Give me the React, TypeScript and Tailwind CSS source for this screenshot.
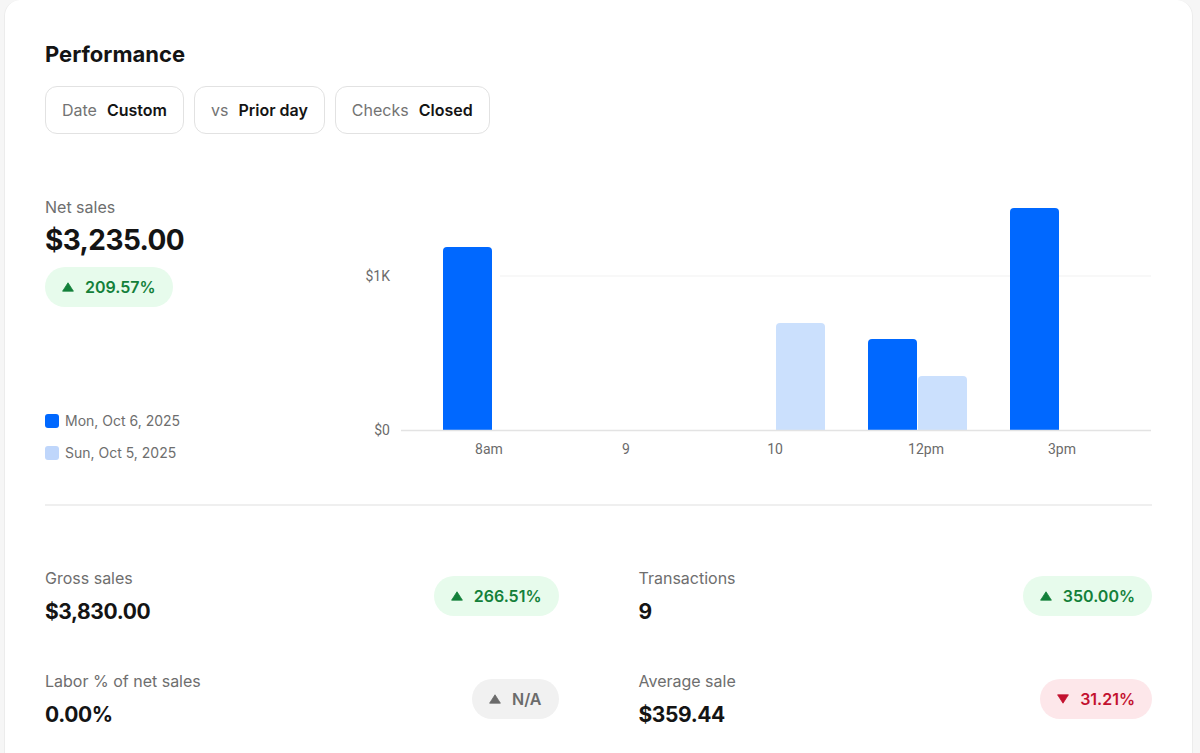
import React from "react";

type Trend = "up" | "down" | "na";

const font = { fontFamily: "Inter, 'Noto Sans', sans-serif" };

function Triangle({ dir, color }: { dir: "up" | "down"; color: string }) {
  return (
    <svg width="12" height="10" viewBox="0 0 12 10">
      {dir === "up" ? (
        <path d="M6 0.8 L11.4 9.2 L0.6 9.2 Z" fill={color} strokeLinejoin="round" stroke={color} strokeWidth="0.8" />
      ) : (
        <path d="M0.6 0.8 L11.4 0.8 L6 9.2 Z" fill={color} strokeLinejoin="round" stroke={color} strokeWidth="0.8" />
      )}
    </svg>
  );
}

function Pill({ trend, value }: { trend: Trend; value: string }) {
  if (trend === "up")
    return (
      <div className="flex h-10 items-center gap-[11px] rounded-full bg-[#e7fbec] px-[17px] text-[16px] font-semibold text-[#13803a]">
        <Triangle dir="up" color="#13803a" />
        {value}
      </div>
    );
  if (trend === "down")
    return (
      <div className="flex h-10 items-center gap-[11px] rounded-full bg-[#fde7ea] px-[17px] text-[16px] font-semibold text-[#c3112f]">
        <Triangle dir="down" color="#c3112f" />
        {value}
      </div>
    );
  return (
    <div className="flex h-10 items-center gap-[11px] rounded-full bg-[#f1f1f1] px-[17px] text-[16px] font-semibold text-[#6b6b6b]">
      <Triangle dir="up" color="#6b6b6b" />
      {value}
    </div>
  );
}

function Chip({ label, value }: { label: string; value: string }) {
  return (
    <div className="flex h-12 items-center gap-[10px] rounded-xl border border-[#e2e2e2] px-4 text-[16px]">
      <span className="text-[#737373]">{label}</span>
      <span className="font-semibold text-[#141414]">{value}</span>
    </div>
  );
}

function Metric({ label, value, trend, change }: { label: string; value: string; trend: Trend; change: string }) {
  return (
    <div className="flex items-center justify-between">
      <div>
        <div className="text-[16px] leading-6 text-[#6e6e6e]">{label}</div>
        <div className="mt-2 text-[21px] font-bold leading-7 tracking-[-0.4px] text-[#141414]">{value}</div>
      </div>
      <Pill trend={trend} value={change} />
    </div>
  );
}

const DARK = "#0068ff";
const LIGHT = "#cbe0fd";

function bar(x: number, top: number, w: number, base: number, r = 4) {
  return `M${x} ${base} L${x} ${top + r} Q${x} ${top} ${x + r} ${top} L${x + w - r} ${top} Q${x + w} ${top} ${x + w} ${top + r} L${x + w} ${base} Z`;
}

function Chart() {
  const base = 235;
  const bars = [
    { x: 103, top: 52, c: DARK },
    { x: 436, top: 128, c: LIGHT },
    { x: 528, top: 144, c: DARK },
    { x: 578, top: 181, c: LIGHT },
    { x: 670, top: 13, c: DARK },
  ];
  const labels = [
    { x: 149, t: "8am" },
    { x: 286, t: "9" },
    { x: 435, t: "10" },
    { x: 586, t: "12pm" },
    { x: 722, t: "3pm" },
  ];
  return (
    <svg width="812" height="270" viewBox="0 0 812 270" className="block">
      <line x1="160" y1="81" x2="811" y2="81" stroke="#f1f1f1" strokeWidth="1" />
      <text x="50" y="86" textAnchor="end" fontSize="14" fill="#6b6b6b" fontFamily="Roboto, sans-serif">
        $1K
      </text>
      <text x="50" y="240" textAnchor="end" fontSize="14" fill="#6b6b6b" fontFamily="Roboto, sans-serif">
        $0
      </text>
      {bars.map((b, i) => (
        <path key={i} d={bar(b.x, b.top, 49, base)} fill={b.c} />
      ))}
      <line x1="61" y1={base + 0.5} x2="811" y2={base + 0.5} stroke="#e3e3e3" strokeWidth="1.5" />
      {labels.map((l) => (
        <text key={l.t} x={l.x} y="259" textAnchor="middle" fontSize="14" fill="#6b6b6b" fontFamily="Roboto, sans-serif">
          {l.t}
        </text>
      ))}
    </svg>
  );
}

export default function App() {
  return (
    <div className="min-h-screen bg-[#f6f6f6] pl-[4px] pr-[7px]" style={font}>
      <div className="min-h-[753px] rounded-t-2xl border-x border-[#ececec] bg-white px-10 pt-10">
        <h1 className="text-[22px] font-bold leading-7 text-[#141414]">Performance</h1>
        <div className="mt-[18px] flex gap-[10px]">
          <Chip label="Date" value="Custom" />
          <Chip label="vs" value="Prior day" />
          <Chip label="Checks" value="Closed" />
        </div>

        <div className="mt-[61px] flex">
          <div className="w-[295px]">
            <div className="text-[16px] leading-6 text-[#6e6e6e]">Net sales</div>
            <div className="mt-[3px] text-[28px] font-bold leading-9 tracking-[-0.6px] text-[#141414]">$3,235.00</div>
            <div className="mt-[9px] flex">
              <Pill trend="up" value="209.57%" />
            </div>
            <div className="mt-[104px] flex items-center gap-[6px] text-[14px] leading-5 text-[#6e6e6e]">
              <span className="h-[14px] w-[14px] rounded-[3px] bg-[#0068ff]" />
              Mon, Oct 6, 2025
            </div>
            <div className="mt-3 flex items-center gap-[6px] text-[14px] leading-5 text-[#6e6e6e]">
              <span className="h-[14px] w-[14px] rounded-[3px] bg-[#bfd6fb]" />
              Sun, Oct 5, 2025
            </div>
          </div>
          <Chart />
        </div>

        <div className="mt-[39px] h-[2px] bg-[#efefef]" />

        <div className="mt-[60px] grid grid-cols-2 gap-x-20 gap-y-[43px]">
          <Metric label="Gross sales" value="$3,830.00" trend="up" change="266.51%" />
          <Metric label="Transactions" value="9" trend="up" change="350.00%" />
          <Metric label="Labor % of net sales" value="0.00%" trend="na" change="N/A" />
          <Metric label="Average sale" value="$359.44" trend="down" change="31.21%" />
        </div>
      </div>
    </div>
  );
}
